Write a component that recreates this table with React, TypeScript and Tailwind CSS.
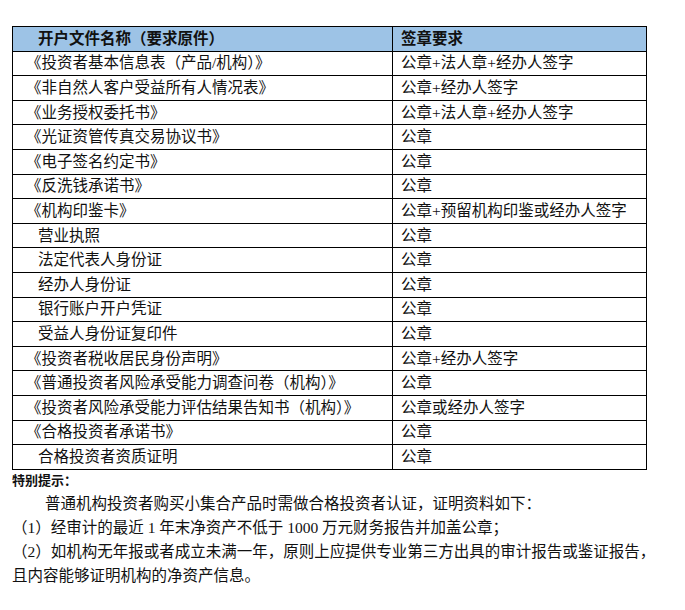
const rows: { name: string; sub?: boolean; req: string }[] = [
  { name: "《投资者基本信息表（产品/机构）》", req: "公章+法人章+经办人签字" },
  { name: "《非自然人客户受益所有人情况表》", req: "公章+经办人签字" },
  { name: "《业务授权委托书》", req: "公章+法人章+经办人签字" },
  { name: "《光证资管传真交易协议书》", req: "公章" },
  { name: "《电子签名约定书》", req: "公章" },
  { name: "《反洗钱承诺书》", req: "公章" },
  { name: "《机构印鉴卡》", req: "公章+预留机构印鉴或经办人签字" },
  { name: "营业执照", sub: true, req: "公章" },
  { name: "法定代表人身份证", sub: true, req: "公章" },
  { name: "经办人身份证", sub: true, req: "公章" },
  { name: "银行账户开户凭证", sub: true, req: "公章" },
  { name: "受益人身份证复印件", sub: true, req: "公章" },
  { name: "《投资者税收居民身份声明》", req: "公章+经办人签字" },
  { name: "《普通投资者风险承受能力调查问卷（机构）》", req: "公章" },
  { name: "《投资者风险承受能力评估结果告知书（机构）》", req: "公章或经办人签字" },
  { name: "《合格投资者承诺书》", req: "公章" },
  { name: "合格投资者资质证明", sub: true, req: "公章" },
];

export default function App() {
  return (
    <div className="bg-white pl-[12px] pt-[26px] text-[#111] font-['Liberation_Serif','Noto_Sans_CJK_SC',serif]">
      <table className="w-[635px] table-fixed border-collapse text-[15.5px] leading-[20px]">
        <colgroup>
          <col className="w-[380px]" />
          <col />
        </colgroup>
        <thead>
          <tr className="h-[24.6px] bg-[#9dc3e6]">
            <th className="border border-black pl-[25px] text-left font-bold">
              开户文件名称（要求原件）
            </th>
            <th className="border border-black pl-[8px] text-left font-bold">
              签章要求
            </th>
          </tr>
        </thead>
        <tbody>
          {rows.map((r) => (
            <tr key={r.name} className="h-[24.6px]">
              <td
                className={
                  r.sub
                    ? "border border-black pl-[25px] whitespace-nowrap"
                    : "border border-black pl-[13px] whitespace-nowrap"
                }
              >
                {r.name}
              </td>
              <td className="border border-black pl-[8px] whitespace-nowrap">
                {r.req}
              </td>
            </tr>
          ))}
        </tbody>
      </table>

      <div className="whitespace-nowrap text-[15.5px] leading-[24px]">
        <p className="text-[13px] font-bold leading-[22px]">特别提示：</p>
        <p className="pl-[33px]">
          普通机构投资者购买小集合产品时需做合格投资者认证，证明资料如下：
        </p>
        <p>（1）经审计的最近 1 年末净资产不低于 1000 万元财务报告并加盖公章；</p>
        <p>
          （2）如机构无年报或者成立未满一年，原则上应提供专业第三方出具的审计报告或鉴证报告，
        </p>
        <p>且内容能够证明机构的净资产信息。</p>
      </div>
    </div>
  );
}
